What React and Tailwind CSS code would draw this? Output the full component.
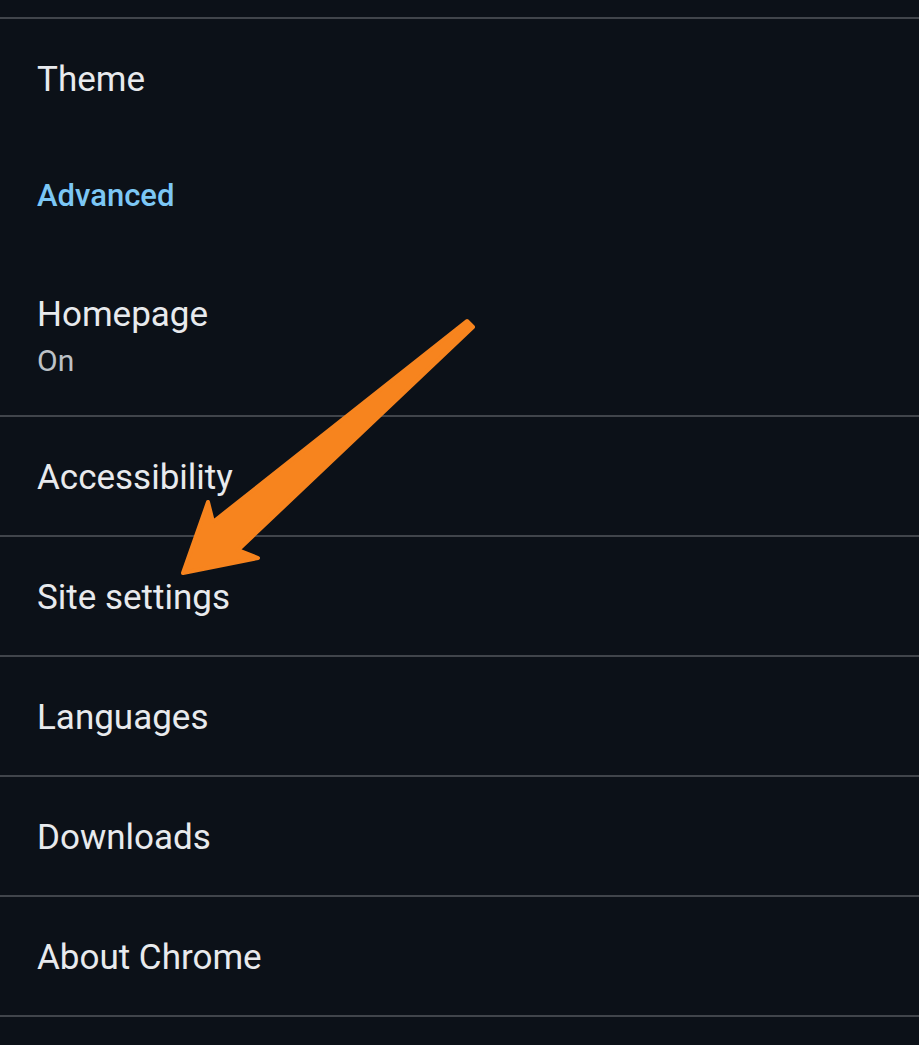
export default function App() {
  const rows = ['Accessibility', 'Site settings', 'Languages', 'Downloads', 'About Chrome']

  return (
    <div className="relative w-[919px] h-[1045px] overflow-hidden bg-[#0c1118] text-[#e8eaed]" style={{ fontFamily: 'Roboto, "Noto Sans", sans-serif' }}>
      <div className="h-[17px]" />
      <div className="border-t-2 border-[#41454b]">
        <div className="h-[120px] flex items-center pl-[37px] pt-[2px] text-[35px]">Theme</div>
        <div className="h-[112px] flex items-center pl-[37px] pt-[2px] text-[31px] font-medium text-[#7cc7f5]">Advanced</div>
        <div className="h-[164px] pl-[37px] pt-[42px]">
          <div className="text-[35px] leading-[44px]">Homepage</div>
          <div className="text-[30px] leading-[44px] mt-[2px] text-[#bdc1c6]">On</div>
        </div>
      </div>
      {rows.map(label => (
        <div key={label} className="h-[120px] border-t-2 border-[#41454b] flex items-center pl-[37px] pt-[5px] text-[35px]">
          {label}
        </div>
      ))}
      <div className="border-t-2 border-[#41454b]" />

      {/* annotation arrow */}
      <svg className="absolute left-0 top-0 pointer-events-none" width="919" height="1045" viewBox="0 0 919 1045">
        <path
          d="M 473 327 L 238 550 L 258 558 L 183 573 L 208 502 L 213 522 L 467 321 Z"
          fill="#f7841e"
          stroke="#f7841e"
          strokeWidth="4"
          strokeLinejoin="round"
        />
      </svg>
    </div>
  )
}
